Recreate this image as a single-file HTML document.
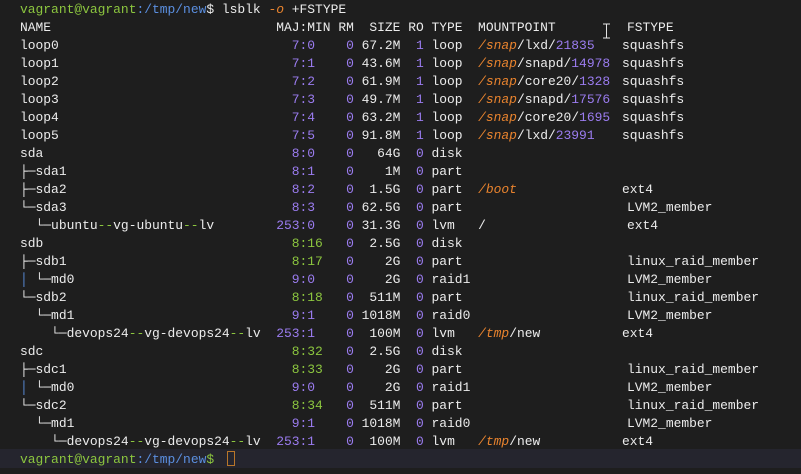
<!DOCTYPE html>
<html><head><meta charset="utf-8"><style>
html,body{margin:0;padding:0;background:#1e1e1e;width:801px;height:474px;overflow:hidden}
.t{position:absolute;left:20px;top:1px;font-family:"Liberation Mono","DejaVu Sans Mono",monospace;font-size:12.95px;line-height:18px;color:#ececec}
.r{position:relative;height:18px;white-space:pre}
.f{position:absolute;top:0}
.g{color:#8cc63f}.b{color:#5b8fe0}.p{color:#9b7cf0}.o{color:#e8832e;font-style:italic}
.band{position:absolute;left:0;top:449px;width:801px;height:19px;background:#25252e}
.cur{position:absolute;left:227px;top:451px;width:6px;height:13px;border:1.5px solid #b8762a}
</style></head><body>
<div class="band"></div>
<div class="t"><div class="r"><span class="g">vagrant@vagrant</span><span class="b">:/tmp/new</span>$ lsblk <span class="o">-o</span> +FSTYPE</div><div class="r">NAME                             MAJ:MIN RM  SIZE RO TYPE  MOUNTPOINT<span class="f" style="left:607px">FSTYPE</span></div><div class="r">loop0                              <span class="p">7:0</span>    <span class="p">0</span> 67.2M  <span class="p">1</span> loop  <span class="o">/snap</span>/lxd/<span class="p">21835</span><span class="f" style="left:602px">squashfs</span></div><div class="r">loop1                              <span class="p">7:1</span>    <span class="p">0</span> 43.6M  <span class="p">1</span> loop  <span class="o">/snap</span>/snapd/<span class="p">14978</span><span class="f" style="left:602px">squashfs</span></div><div class="r">loop2                              <span class="p">7:2</span>    <span class="p">0</span> 61.9M  <span class="p">1</span> loop  <span class="o">/snap</span>/core20/<span class="p">1328</span><span class="f" style="left:602px">squashfs</span></div><div class="r">loop3                              <span class="p">7:3</span>    <span class="p">0</span> 49.7M  <span class="p">1</span> loop  <span class="o">/snap</span>/snapd/<span class="p">17576</span><span class="f" style="left:602px">squashfs</span></div><div class="r">loop4                              <span class="p">7:4</span>    <span class="p">0</span> 63.2M  <span class="p">1</span> loop  <span class="o">/snap</span>/core20/<span class="p">1695</span><span class="f" style="left:602px">squashfs</span></div><div class="r">loop5                              <span class="p">7:5</span>    <span class="p">0</span> 91.8M  <span class="p">1</span> loop  <span class="o">/snap</span>/lxd/<span class="p">23991</span><span class="f" style="left:602px">squashfs</span></div><div class="r">sda                                <span class="p">8:0</span>    <span class="p">0</span>   64G  <span class="p">0</span> disk</div><div class="r">├─sda1                             <span class="p">8:1</span>    <span class="p">0</span>    1M  <span class="p">0</span> part</div><div class="r">├─sda2                             <span class="p">8:2</span>    <span class="p">0</span>  1.5G  <span class="p">0</span> part  <span class="o">/boot</span><span class="f" style="left:602px">ext4</span></div><div class="r">└─sda3                             <span class="p">8:3</span>    <span class="p">0</span> 62.5G  <span class="p">0</span> part<span class="f" style="left:607px">LVM2_member</span></div><div class="r">  └─ubuntu<span class="g">--</span>vg-ubuntu<span class="g">--</span>lv        <span class="p">253:0</span>    <span class="p">0</span> 31.3G  <span class="p">0</span> lvm   /<span class="f" style="left:607px">ext4</span></div><div class="r">sdb                                <span class="g">8:16</span>   <span class="p">0</span>  2.5G  <span class="p">0</span> disk</div><div class="r">├─sdb1                             <span class="g">8:17</span>   <span class="p">0</span>    2G  <span class="p">0</span> part<span class="f" style="left:607px">linux_raid_member</span></div><div class="r"><span class="b">│</span> └─md0                            <span class="p">9:0</span>    <span class="p">0</span>    2G  <span class="p">0</span> raid1<span class="f" style="left:607px">LVM2_member</span></div><div class="r">└─sdb2                             <span class="g">8:18</span>   <span class="p">0</span>  511M  <span class="p">0</span> part<span class="f" style="left:607px">linux_raid_member</span></div><div class="r">  └─md1                            <span class="p">9:1</span>    <span class="p">0</span> 1018M  <span class="p">0</span> raid0<span class="f" style="left:607px">LVM2_member</span></div><div class="r">    └─devops24<span class="g">--</span>vg-devops24<span class="g">--</span>lv  <span class="p">253:1</span>    <span class="p">0</span>  100M  <span class="p">0</span> lvm   <span class="o">/tmp</span>/new<span class="f" style="left:602px">ext4</span></div><div class="r">sdc                                <span class="g">8:32</span>   <span class="p">0</span>  2.5G  <span class="p">0</span> disk</div><div class="r">├─sdc1                             <span class="g">8:33</span>   <span class="p">0</span>    2G  <span class="p">0</span> part<span class="f" style="left:607px">linux_raid_member</span></div><div class="r"><span class="b">│</span> └─md0                            <span class="p">9:0</span>    <span class="p">0</span>    2G  <span class="p">0</span> raid1<span class="f" style="left:607px">LVM2_member</span></div><div class="r">└─sdc2                             <span class="g">8:34</span>   <span class="p">0</span>  511M  <span class="p">0</span> part<span class="f" style="left:607px">linux_raid_member</span></div><div class="r">  └─md1                            <span class="p">9:1</span>    <span class="p">0</span> 1018M  <span class="p">0</span> raid0<span class="f" style="left:607px">LVM2_member</span></div><div class="r">    └─devops24<span class="g">--</span>vg-devops24<span class="g">--</span>lv  <span class="p">253:1</span>    <span class="p">0</span>  100M  <span class="p">0</span> lvm   <span class="o">/tmp</span>/new<span class="f" style="left:602px">ext4</span></div><div class="r"><span class="g">vagrant@vagrant</span><span class="b">:/tmp/new</span><span class="g">$</span></div></div>
<div class="cur"></div>
<svg style="position:absolute;left:602px;top:23px" width="9" height="16" viewBox="0 0 9 16"><path d="M1 1H8M4.5 1V15M1 15H8" stroke="#e4e4e4" stroke-width="1" fill="none"/></svg>
</body></html>
